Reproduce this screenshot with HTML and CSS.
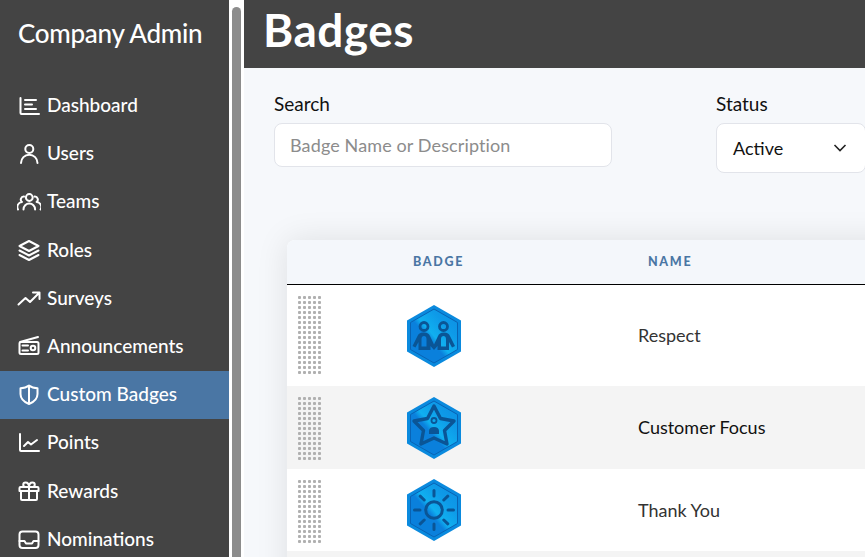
FILE: index.html
```html
<!DOCTYPE html>
<html lang="en">
<head>
<meta charset="utf-8">
<title>Badges</title>
<link rel="stylesheet" href="styles.css">
</head>
<body>
<div class="app">
  <aside class="sidebar">
    <div class="brand">Company Admin</div>
    <nav class="nav">
      <a class="nav-item"><svg class="nav-icon" viewBox="0 0 24 24"><path d="M3.500 4v15a1 1 0 0 0 1 1H22M8 6h11M8 10.500h7M8 15h11"/></svg><span>Dashboard</span></a>
      <a class="nav-item"><svg class="nav-icon" viewBox="0 0 24 24"><circle cx="12.300" cy="7" r="4"/><path d="M4 21a8.200 8.200 0 0 1 16.500 0"/></svg><span>Users</span></a>
      <a class="nav-item"><svg class="nav-icon" viewBox="0 0 24 24"><circle cx="12.300" cy="7.500" r="3.400"/><path d="M6.500 19.500a5.800 6 0 0 1 11.600 0M7 6.600a3 3 0 0 0-2 5.400 5 5 0 0 0-4 7.500M17.600 6.600a3 3 0 0 1 2 5.400 5 5 0 0 1 4 7.500"/></svg><span>Teams</span></a>
      <a class="nav-item"><svg class="nav-icon" viewBox="0 0 24 24"><path d="M12 2l9.500 5-9.500 5-9.500-5zM2.500 11.500l9.500 5 9.500-5M2.500 16l9.500 5 9.500-5"/></svg><span>Roles</span></a>
      <a class="nav-item"><svg class="nav-icon" viewBox="0 0 24 24"><path d="M1.500 17.500l7-6.500 4.500 4 9.500-9.500M16 5.500h6.500V12"/></svg><span>Surveys</span></a>
      <a class="nav-item"><svg class="nav-icon" viewBox="0 0 24 24"><path d="M3 7l18-5M4 7h16a1.500 1.500 0 0 1 1.500 1.500v9a1.500 1.500 0 0 1-1.500 1.500H4a1.500 1.500 0 0 1-1.500-1.500v-9A1.500 1.500 0 0 1 4 7zM5.500 10.500h5.500M5.500 15.500h5.500"/><circle cx="16" cy="13" r="2.300"/></svg><span>Announcements</span></a>
      <a class="nav-item is-active"><svg class="nav-icon" viewBox="0 0 24 24"><path d="M12 2.500C9.500 4.500 6.500 5.200 3.500 5.200V11c0 5 3.500 8 8.500 10 5-2 8.500-5 8.500-10V5.200C17.500 5.200 14.500 4.500 12 2.500zM12 2.500V21"/></svg><span>Custom Badges</span></a>
      <a class="nav-item"><svg class="nav-icon" viewBox="0 0 24 24"><path d="M3 3v16a1 1 0 0 0 1 1h18M7 15l4-4 3 2.500 6-4.500"/></svg><span>Points</span></a>
      <a class="nav-item"><svg class="nav-icon" viewBox="0 0 24 24"><path d="M3.500 7h17a1 1 0 0 1 1 1v3h-19V8a1 1 0 0 1 1-1zM4 11v8a1 1 0 0 0 1 1h14a1 1 0 0 0 1-1v-8M12 7v13M12 7C12 4 10.300 2.500 8.500 2.500a2.250 2.250 0 0 0 0 4.500M12 7c0-3 1.700-4.500 3.500-4.500a2.250 2.250 0 0 1 0 4.500"/></svg><span>Rewards</span></a>
      <a class="nav-item"><svg class="nav-icon" viewBox="0 0 24 24"><rect x="2.500" y="3.500" width="19" height="16.500" rx="3"/><path d="M2.500 13h5l1.500 2.500h6l1.500-2.500h5"/></svg><span>Nominations</span></a>
    </nav>
  </aside>

  <div class="rail"><div class="rail-thumb"></div></div>

  <main class="main">
    <header class="page-header"><h1>Badges</h1></header>

    <section class="filters">
      <div class="field field-search">
        <label class="field-label" for="search">Search</label>
        <input class="search-input" id="search" type="text" placeholder="Badge Name or Description">
      </div>
      <div class="field field-status">
        <div class="field-label">Status</div>
        <div class="select">
          <span>Active</span>
          <svg class="chevron" viewBox="0 0 14 8"><path d="M1.500 1l5.500 5.500L12.500 1"/></svg>
        </div>
      </div>
    </section>

    <section class="table">
      <div class="table-head">
        <div></div>
        <div class="th th-badge">BADGE</div>
        <div class="th th-name">NAME</div>
      </div>

      <div class="row row-first">
        <div class="handle"></div>
        <div class="badge-cell">
          <svg class="badge" viewBox="0 0 54 62">
            <defs>
              <linearGradient id="sheen" x1="0" y1="1" x2="1" y2="0">
                <stop offset="0" stop-color="#0a80dc"/>
                <stop offset="0.42" stop-color="#0a80dc"/>
                <stop offset="0.5" stop-color="#10b0f0"/>
                <stop offset="0.72" stop-color="#0e9ae8"/>
                <stop offset="1" stop-color="#0c8ee2"/>
              </linearGradient>
            </defs>
            <path class="hex-outer" d="M27 0l27 15.500v31L27 62 0 46.500v-31z"/>
            <path class="hex-inner" d="M27 4l23.500 13.500v27L27 58 3.500 44.500v-27z"/>
            <circle class="glyph glyph-head" cx="17" cy="21.500" r="4"/>
            <circle class="glyph glyph-head" cx="36.500" cy="21.500" r="4"/>
            <path class="glyph-fill" d="M17 27.500c3.500 0 5 1.500 6 3.500l4 8.500 4-8.500c1-2 2.500-3.500 6-3.500s5 1.500 6 3.500l5 10-3 1.500-3-5.500V45H30.500v-4L27 45l-3.500-4v4H11.500v-8l-3 5.500-3-1.500 5-10c1-2 2.500-3.500 6-3.500zm0 3.500c-1.500 0-2.500 1-2.500 3v7.500h5V34c0-2-1-3-2.500-3zm19.500 0c-1.500 0-2.500 1-2.500 3v7.500h5V34c0-2-1-3-2.500-3z"/>
          </svg>
        </div>
        <div class="name">Respect</div>
      </div>

      <div class="row row-alt">
        <div class="handle handle-short"></div>
        <div class="badge-cell">
          <svg class="badge" viewBox="0 0 54 62">
            <path class="hex-outer" d="M27 0l27 15.500v31L27 62 0 46.500v-31z"/>
            <path class="hex-inner" d="M27 4l23.500 13.500v27L27 58 3.500 44.500v-27z"/>
            <path class="glyph glyph-thick" d="M27 9l6.500 12.500L47 24l-9.500 9.500L40 47l-13-6-13 6 2.500-13.500L7 24l13.500-2.500z"/>
            <circle class="glyph glyph-small" cx="27" cy="23.500" r="2.500"/>
            <path class="glyph-fill" d="M22 37v-3c0-2.500 2-4 5-4s5 1.500 5 4v3z"/>
          </svg>
        </div>
        <div class="name name-dark">Customer Focus</div>
      </div>

      <div class="row row-plain">
        <div class="handle handle-short"></div>
        <div class="badge-cell">
          <svg class="badge" viewBox="0 0 54 62">
            <path class="hex-outer" d="M27 0l27 15.500v31L27 62 0 46.500v-31z"/>
            <path class="hex-inner" d="M27 4l23.500 13.500v27L27 58 3.500 44.500v-27z"/>
            <circle class="glyph glyph-sun" cx="27" cy="31" r="8.300"/>
            <path class="glyph glyph-ray" d="M27 11.500v5.500M27 45v5.500M7.500 31H13M41 31h5.500M13.200 17.200l4 3.800M36.800 41l4 3.800M40.800 17.200l-4 3.800M17.200 41l-4 3.800"/>
          </svg>
        </div>
        <div class="name name-last">Thank You</div>
      </div>

      <div class="row row-alt"></div>
    </section>
  </main>
</div>
</body>
</html>
```

FILE: styles.css
```css
* {
  box-sizing: border-box;
}

html,
body {
  margin: 0;
  height: 100%;
  overflow: hidden;
}

body {
  font-family: "Lato", "Noto Sans", sans-serif;
  color: #111;
  background: #f6f8fb;
}

.app {
  display: flex;
  height: 100vh;
}

.sidebar {
  flex: 0 0 229px;
  background: #444;
  color: #fff;
  overflow: hidden;
}

.brand {
  height: 82px;
  padding: 17px 0 0 18px;
  font-size: 26px;
  line-height: 32px;
  font-weight: 500;
  letter-spacing: -0.3px;
}

.nav {
  display: flex;
  flex-direction: column;
}

.nav-item {
  display: flex;
  flex: 0 0 48.2px;
  align-items: center;
  gap: 6px;
  padding-left: 17px;
  font-size: 19px;
  font-weight: 500;
}

.nav-item span {
  padding-bottom: 3px;
}

.nav-item.is-active {
  background: #4a76a4;
}

.nav-icon {
  flex: none;
  width: 24px;
  height: 24px;
  fill: none;
  stroke: #fff;
  stroke-width: 2;
  stroke-linecap: round;
  stroke-linejoin: round;
}

.rail {
  flex: 0 0 15px;
  padding: 7px 3px 0;
  background: #fff;
}

.rail-thumb {
  height: 100%;
  background: #8c8c8c;
  border-radius: 5px 5px 0 0;
}

.main {
  flex: 1;
  min-width: 0;
  overflow: hidden;
}

.page-header {
  height: 68px;
  padding-left: 19px;
  background: #444;
  color: #fff;
}

.page-header h1 {
  margin: 0;
  font-size: 46px;
  line-height: 60px;
  font-weight: 700;
  letter-spacing: 0.5px;
}

.filters {
  display: flex;
  align-items: flex-start;
  gap: 104px;
  padding: 24px 0 0 30px;
  width: 700px;
}

.field-label {
  display: block;
  height: 31px;
  font-size: 19px;
  line-height: 24px;
  color: #111;
}

.field-search {
  flex: 0 0 338px;
}

.field-status {
  flex: 0 0 150px;
}

.search-input {
  display: block;
  width: 100%;
  height: 44px;
  padding: 0 15px;
  border: 1px solid #e2e4ea;
  border-radius: 8px;
  background: #fff;
  font: inherit;
  font-size: 18px;
  letter-spacing: 0.12px;
  outline: none;
}

.search-input::placeholder {
  color: #8c8c8c;
  opacity: 1;
}

.select {
  display: flex;
  align-items: center;
  justify-content: space-between;
  height: 50px;
  padding: 0 18px 0 16px;
  border: 1px solid #e2e4ea;
  border-radius: 8px;
  background: #fff;
  font-size: 18px;
}

.chevron {
  width: 14px;
  height: 8px;
  fill: none;
  stroke: #222;
  stroke-width: 1.600;
}

.table {
  width: 700px;
  margin: 67px 0 0 43px;
  border-radius: 8px 8px 0 0;
  background: #fff;
  box-shadow: 0 0 32px rgba(0, 0, 0, 0.1);
}

.table-head,
.row {
  display: grid;
  grid-template-columns: 100px 251px 1fr;
  align-items: center;
}

.table-head {
  height: 45px;
  padding-bottom: 2px;
  border-bottom: 1px solid #000;
  border-radius: 8px 8px 0 0;
  background: #f4f7fb;
}

.th {
  font-size: 12.500px;
  font-weight: 900;
  letter-spacing: 1.700px;
  color: #4a76a4;
}

.th-badge {
  padding-left: 26px;
}

.th-name {
  padding-left: 10px;
}

.row-first {
  height: 101px;
}

.row-alt {
  height: 83px;
  background: #f4f4f4;
}

.row-plain {
  height: 82px;
}

.handle {
  align-self: start;
  width: 25px;
  height: 81px;
  margin: 10px 0 0 10px;
  background-image: radial-gradient(circle, #b0b0b0 1.300px, transparent 1.800px);
  background-size: 5px 5px;
}

.handle-short {
  height: 66px;
}

.badge-cell {
  display: flex;
  padding-left: 20px;
}

.badge {
  width: 54px;
  height: 62px;
}

.hex-outer {
  fill: #0a8ade;
}

.hex-inner {
  fill: url(#sheen);
  stroke: #0963b4;
  stroke-width: 1;
}

.glyph {
  fill: none;
  stroke: #0a5596;
  stroke-width: 2.400;
  stroke-linejoin: round;
}

.glyph-head {
  stroke-width: 2.800;
}

.glyph-thick {
  stroke-width: 3.400;
}

.glyph-small {
  stroke-width: 1.800;
}

.glyph-sun {
  stroke-width: 3;
}

.glyph-ray {
  stroke-linecap: round;
  stroke-width: 3;
}

.glyph-fill {
  fill: #0a5596;
}

.name {
  padding-bottom: 2px;
  font-size: 18px;
  color: #333;
}

.name-dark {
  color: #111;
}

.name-last {
  padding-bottom: 0;
}
```
